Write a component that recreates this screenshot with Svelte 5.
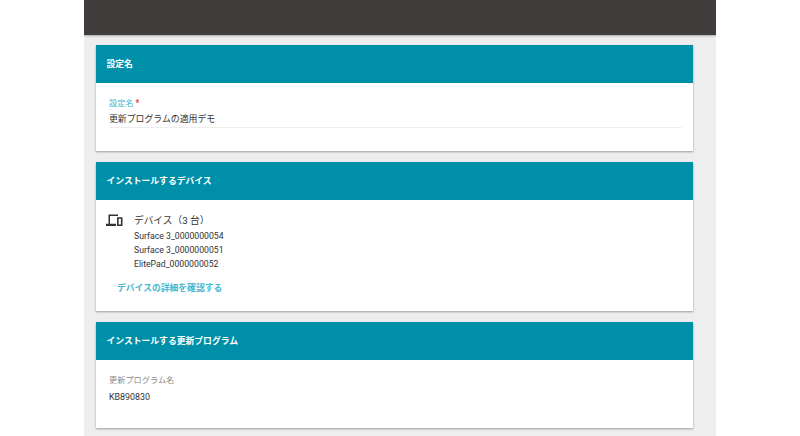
<script>
  const devices = ['Surface 3_0000000054', 'Surface 3_0000000051', 'ElitePad_0000000052'];
</script>

<div class="page">
  <div class="topbar"></div>
  <main class="content">
    <section class="card">
      <h2 class="head">設定名</h2>
      <div class="body name-body">
        <div class="label accent">設定名 <span class="req">*</span></div>
        <div class="value field">更新プログラムの適用デモ</div>
      </div>
    </section>

    <section class="card">
      <h2 class="head">インストールするデバイス</h2>
      <div class="body device-body">
        <div class="device-row">
          <svg class="icon" width="17" height="13" viewBox="0 0 17 13" aria-hidden="true">
            <path d="M2.5 0.5H12V2H4V9.8H10V12H0V9.8H2.5Z" fill="#333" />
            <path fill-rule="evenodd" d="M11 3.2H16.5V12H11ZM12.6 4.8V10.4H14.9V4.8Z" fill="#333" />
          </svg>
          <div class="device-info">
            <div class="device-title">デバイス（3 台）</div>
            {#each devices as d}
              <div class="device-name">{d}</div>
            {/each}
          </div>
        </div>
        <div class="link accent">デバイスの詳細を確認する</div>
      </div>
    </section>

    <section class="card">
      <h2 class="head">インストールする更新プログラム</h2>
      <div class="body update-body">
        <div class="label muted">更新プログラム名</div>
        <div class="value kb">KB890830</div>
      </div>
    </section>
  </main>
</div>

<style>
  :global(body) {
    margin: 0;
    background: #fff;
  }
  .page {
    width: 632px;
    height: 436px;
    margin-left: 84px;
    background: #eeeeee;
    overflow: hidden;
    font-family: Roboto, "Noto Sans CJK JP", sans-serif;
    color: #333;
  }
  .topbar {
    height: 35px;
    background: #413d3c;
    box-shadow: 0 1px 2px rgba(0, 0, 0, 0.3);
  }
  .content {
    display: flex;
    flex-direction: column;
    gap: 11px;
    padding: 10px 23px 0 12px;
  }
  .card {
    background: #fff;
    box-shadow: 0 1px 2px rgba(0, 0, 0, 0.35);
  }
  .head {
    margin: 0;
    height: 38px;
    box-sizing: border-box;
    padding: 0 0 2px 10.5px;
    display: flex;
    align-items: center;
    background: #008fa8;
    color: #fff;
    font-size: 8.8px;
    font-weight: 700;
  }
  .body {
    box-sizing: border-box;
  }
  .name-body {
    height: 68px;
    padding: 14px 11px 0 13px;
  }
  .device-body {
    height: 111px;
    padding: 14px 13px 0 10px;
  }
  .update-body {
    height: 68px;
    padding: 14px 13px 0 13px;
  }
  .label {
    font-size: 8.2px;
    line-height: 12px;
  }
  .accent {
    color: #45b8d0;
  }
  .req {
    color: #e0323a;
    font-weight: 700;
  }
  .muted {
    color: #8a8a8a;
  }
  .value {
    font-size: 8.9px;
    line-height: 14px;
    color: #333;
  }
  .field {
    margin-top: 3px;
    padding-bottom: 1px;
    border-bottom: 1px solid #eeeeee;
  }
  .kb {
    margin-top: 4px;
  }
  .device-row {
    display: flex;
    gap: 11px;
  }
  .icon {
    flex: none;
  }
  .device-title {
    font-size: 9.7px;
    line-height: 14px;
    margin-bottom: 2px;
  }
  .device-name {
    font-size: 8.7px;
    line-height: 13.8px;
  }
  .link {
    margin: 9.6px 0 0 11px;
    font-size: 8.8px;
    line-height: 14px;
    font-weight: 700;
  }
</style>
